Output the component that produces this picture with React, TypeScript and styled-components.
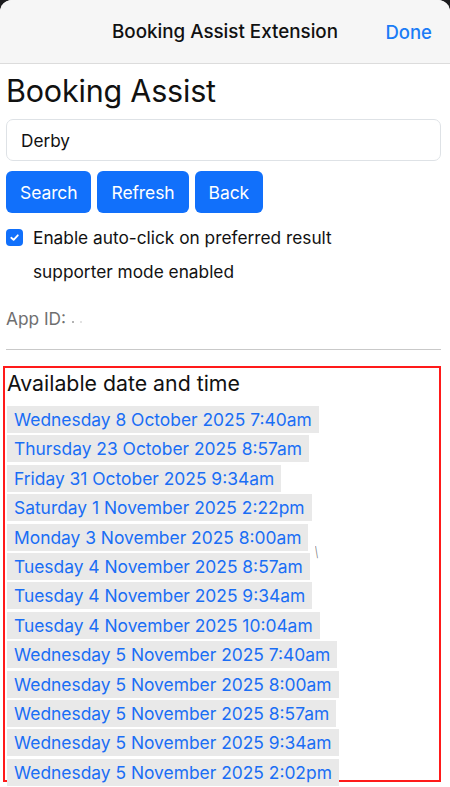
import React from "react";
import styled, { createGlobalStyle } from "styled-components";

const Global = createGlobalStyle`
  html, body { margin: 0; padding: 0; background: #1c1c1e; }
  body { font-family: Inter, "Noto Sans", "Liberation Sans", sans-serif; -webkit-font-smoothing: antialiased; }
  * { box-sizing: border-box; }
`;

const Sheet = styled.div`
  width: 450px;
  height: 787px;
  background: #ffffff;
  border-radius: 12px 12px 0 0;
  overflow: hidden;
  position: relative;
`;

const NavBar = styled.header`
  height: 64px;
  background: #f6f6f6;
  border-bottom: 1px solid #dcdcdc;
  display: grid;
  grid-template-columns: 1fr auto 1fr;
  align-items: center;
  padding: 0 18px 0 18px;
`;

const NavTitle = styled.div`
  grid-column: 2;
  font-size: 18.8px;
  font-weight: 500;
  color: #111;
  letter-spacing: 0;
`;

const DoneButton = styled.button`
  grid-column: 3;
  justify-self: end;
  background: none;
  border: none;
  padding: 0;
  font-family: inherit;
  font-size: 18.5px;
  font-weight: 500;
  color: #1a7cf6;
`;

const Content = styled.main`
  padding: 9px 9px 0 6px;
`;

const Title = styled.h1`
  margin: 0 0 10px 0;
  font-size: 30.5px;
  font-weight: 400;
  color: #111;
  line-height: 36px;
  letter-spacing: -0.2px;
`;

const TextInput = styled.div`
  height: 42px;
  border: 1px solid #dee2e6;
  border-radius: 7px;
  display: flex;
  align-items: center;
  padding: 0 14px;
  font-size: 17.2px;
  color: #111;
`;

const ButtonRow = styled.div`
  display: flex;
  gap: 6px;
  margin-top: 10px;
`;

const PrimaryButton = styled.button`
  height: 42px;
  padding: 0 14px;
  background: #1170fb;
  color: #fff;
  border: none;
  border-radius: 6px;
  font-family: inherit;
  font-size: 17.5px;
  letter-spacing: -0.1px;
`;

const CheckRow = styled.label`
  display: flex;
  align-items: center;
  gap: 10px;
  margin-top: 14px;
  height: 20px;
  font-size: 17.3px;
  color: #111;
`;

const CheckBox = styled.span`
  width: 17px;
  height: 17px;
  border-radius: 4px;
  background: #1170fb;
  display: inline-flex;
  align-items: center;
  justify-content: center;
`;

const Note = styled.div`
  margin: 15px 0 0 27px;
  font-size: 17.3px;
  color: #111;
  line-height: 20px;
`;

const AppId = styled.div`
  margin-top: 27px;
  font-size: 17.3px;
  color: #6f6f6f;
  line-height: 20px;
  display: flex;
  align-items: center;
  gap: 6px;
`;

const Dot = styled.span<{ $c: string }>`
  width: 2px;
  height: 2px;
  border-radius: 1px;
  background: ${(p) => p.$c};
  margin-top: 6px;
`;

const Rule = styled.hr`
  border: none;
  border-top: 1px solid #c9c9c9;
  margin: 20px 0 0 0;
`;

const Results = styled.section`
  margin: 16px 0 0 -3px;
  height: 416px;
  border: 2px solid #ff1a1a;
  padding: 3px 2px 0 2px;
  position: relative;
`;

const ResultsTitle = styled.h2`
  margin: 0 0 10px 0;
  font-size: 21.3px;
  font-weight: 400;
  color: #111;
  line-height: 25px;
  letter-spacing: 0;
`;

const SlotList = styled.div`
  display: flex;
  flex-direction: column;
  align-items: flex-start;
  gap: 2.4px;
`;

const Slot = styled.a`
  display: block;
  background: #e9e9e9;
  color: #1a6ef5;
  font-size: 17.4px;
  line-height: 27px;
  padding: 0 7px;
  text-decoration: none;
  white-space: nowrap;
`;

const Stray = styled.span`
  position: absolute;
  left: 309px;
  top: 175px;
  font-size: 14px;
  color: #777;
  transform: scaleX(0.6);
`;

const slots = [
  "Wednesday 8 October 2025 7:40am",
  "Thursday 23 October 2025 8:57am",
  "Friday 31 October 2025 9:34am",
  "Saturday 1 November 2025 2:22pm",
  "Monday 3 November 2025 8:00am",
  "Tuesday 4 November 2025 8:57am",
  "Tuesday 4 November 2025 9:34am",
  "Tuesday 4 November 2025 10:04am",
  "Wednesday 5 November 2025 7:40am",
  "Wednesday 5 November 2025 8:00am",
  "Wednesday 5 November 2025 8:57am",
  "Wednesday 5 November 2025 9:34am",
  "Wednesday 5 November 2025 2:02pm",
];

export default function App() {
  return (
    <>
      <Global />
      <Sheet>
        <NavBar>
          <NavTitle>Booking Assist Extension</NavTitle>
          <DoneButton>Done</DoneButton>
        </NavBar>
        <Content>
          <Title>Booking Assist</Title>
          <TextInput>Derby</TextInput>
          <ButtonRow>
            <PrimaryButton>Search</PrimaryButton>
            <PrimaryButton>Refresh</PrimaryButton>
            <PrimaryButton>Back</PrimaryButton>
          </ButtonRow>
          <CheckRow>
            <CheckBox>
              <svg width="11" height="11" viewBox="0 0 12 12">
                <path d="M2.5 6.3 L5 8.6 L9.6 3.6" fill="none" stroke="#fff" strokeWidth="2" strokeLinecap="round" strokeLinejoin="round" />
              </svg>
            </CheckBox>
            Enable auto-click on preferred result
          </CheckRow>
          <Note>supporter mode enabled</Note>
          <AppId>
            App ID:
            <Dot $c="#9a9a9a" />
            <Dot $c="#d8d8d8" />
          </AppId>
          <Rule />
          <Results>
            <ResultsTitle>Available date and time</ResultsTitle>
            <SlotList>
              {slots.map((s) => (
                <Slot key={s} href="#">{s}</Slot>
              ))}
            </SlotList>
            <Stray>\</Stray>
          </Results>
        </Content>
      </Sheet>
    </>
  );
}
